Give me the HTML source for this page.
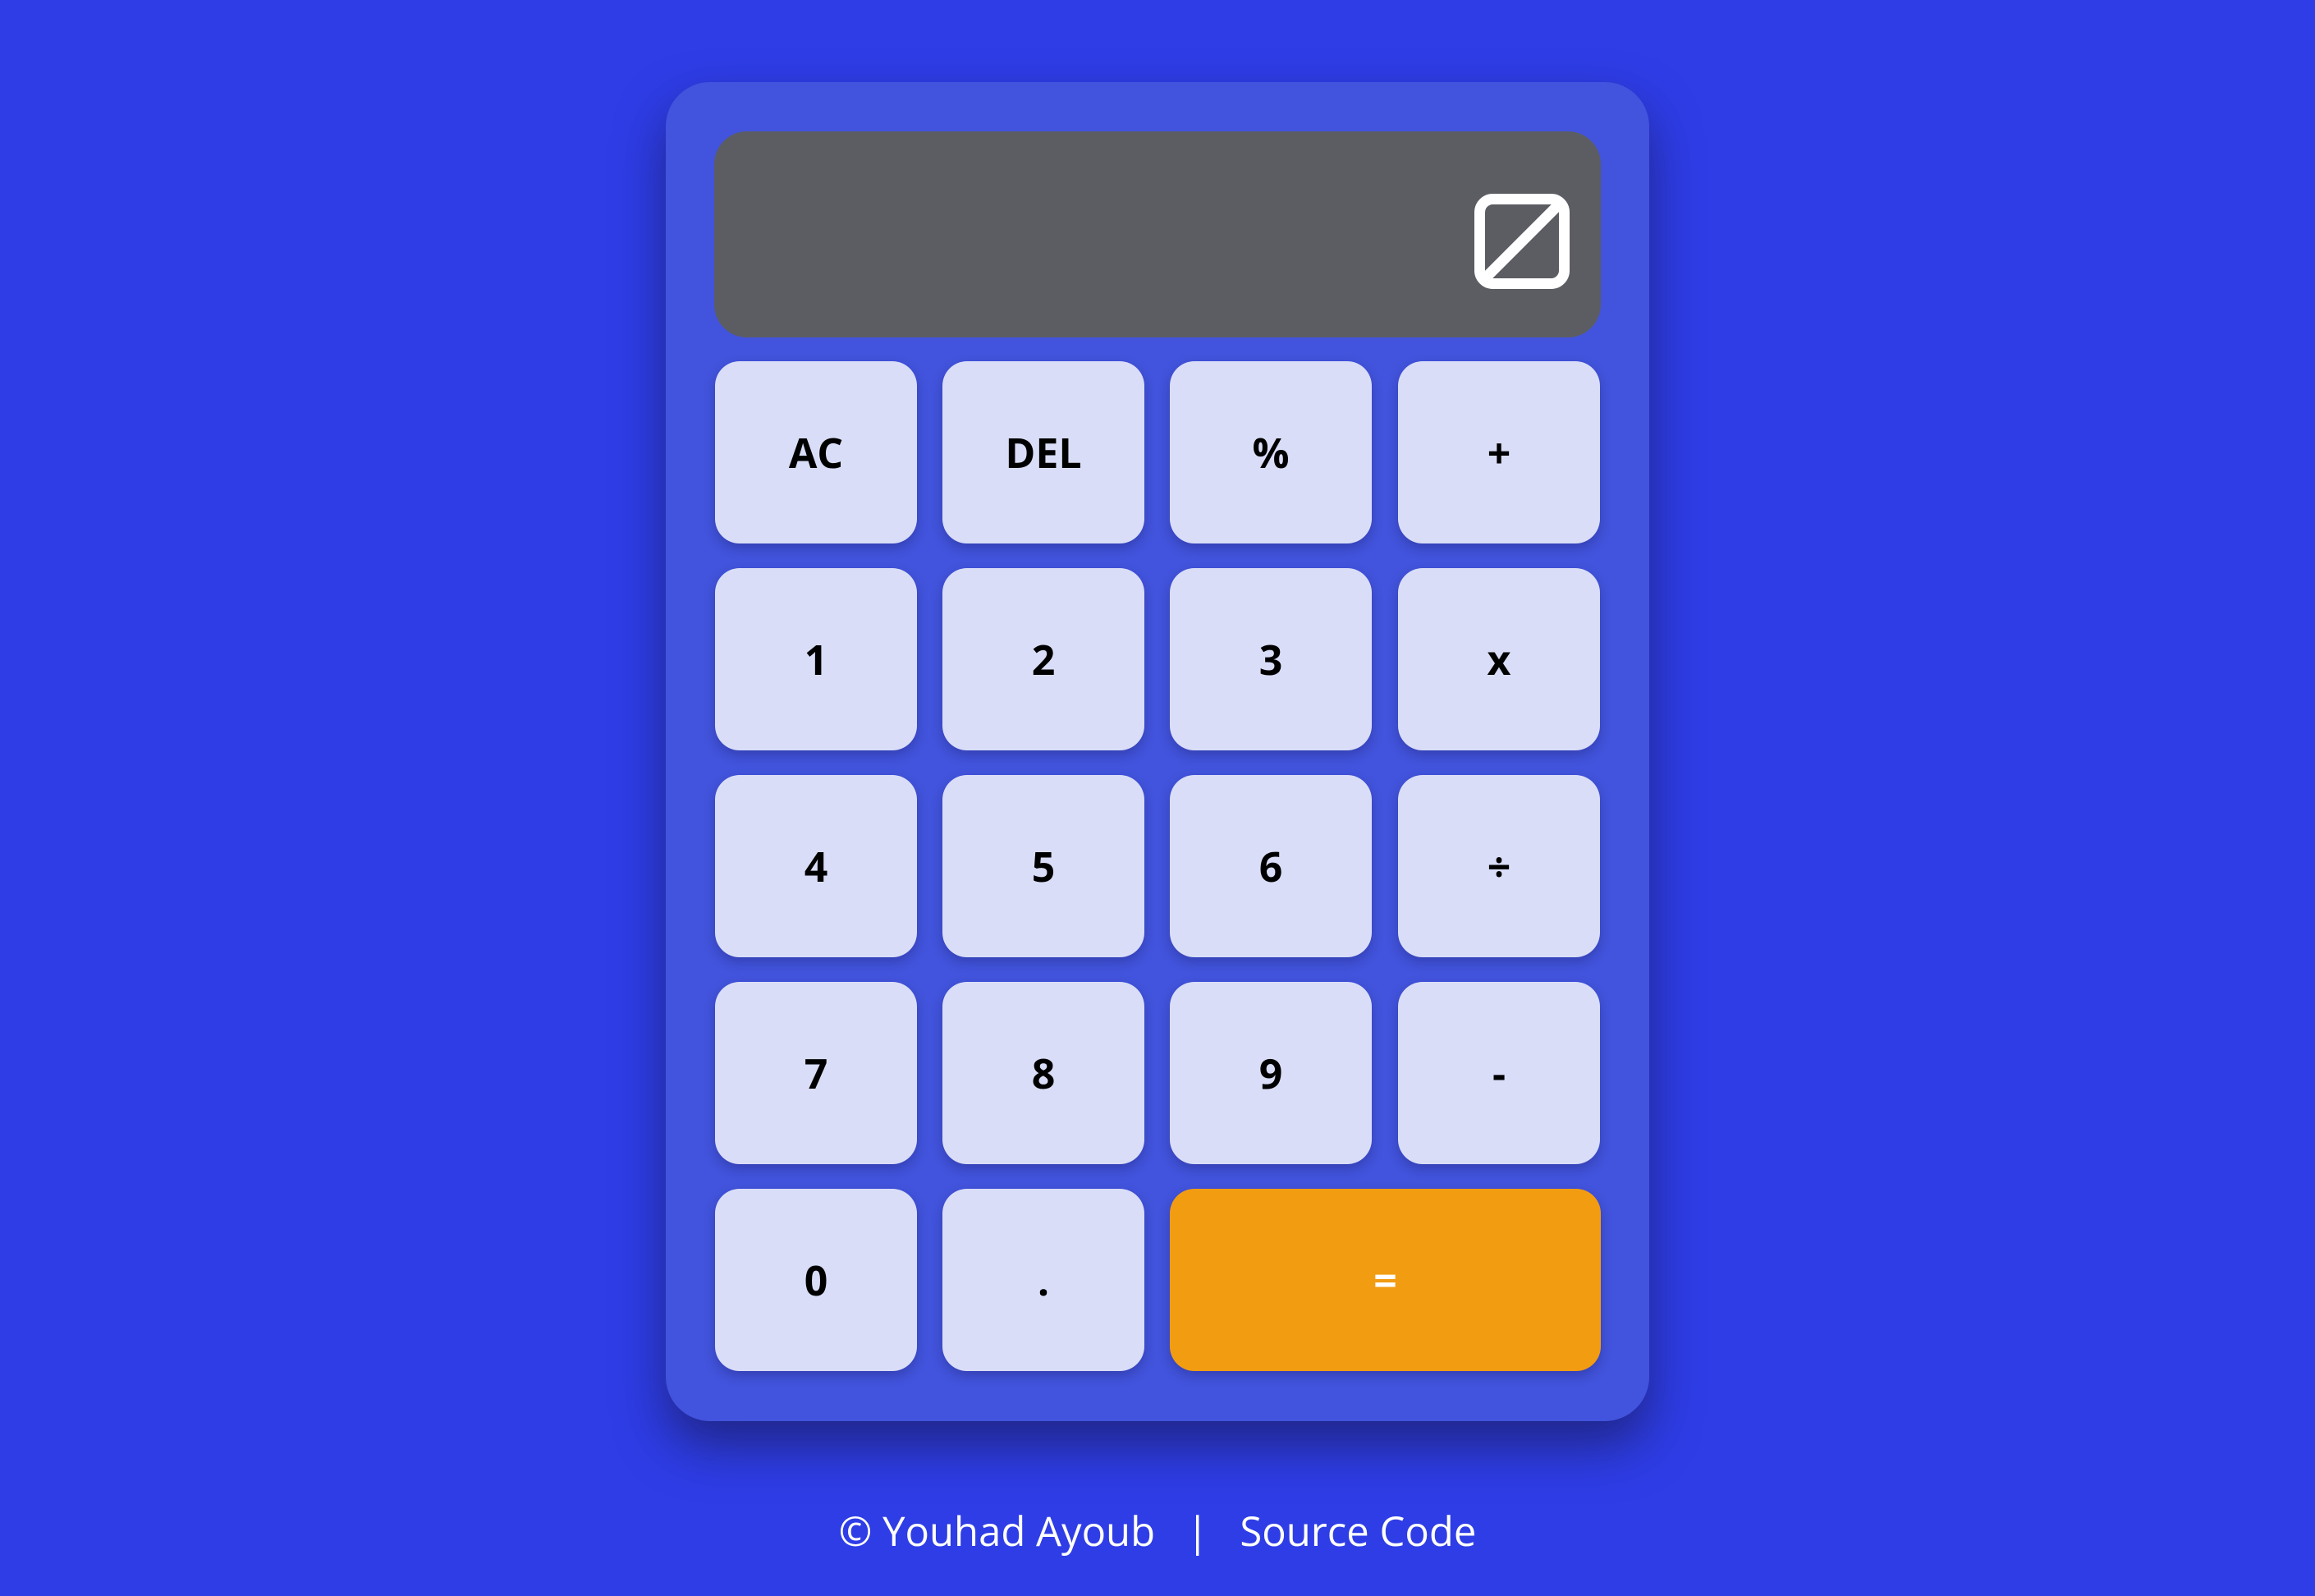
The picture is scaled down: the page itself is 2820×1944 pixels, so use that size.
<!DOCTYPE html>
<html><head><meta charset="utf-8"><style>
html,body{margin:0;padding:0;}
body{width:2820px;height:1944px;background:#2e3de6;position:relative;overflow:hidden;font-family:"Open Sans","Liberation Sans",sans-serif;}
.calc{position:absolute;left:811px;top:100px;width:1198px;height:1631px;background:#4254dd;border-radius:54px;box-shadow:0 30px 60px rgba(20,20,60,0.55);}
.disp{position:absolute;left:870px;top:160px;width:1080px;height:251px;background:#5c5d63;border-radius:40px;}
.b{position:absolute;width:246px;height:222px;background:#d9ddf7;border-radius:30px;display:flex;align-items:center;justify-content:center;font-weight:bold;font-size:50px;color:#000;box-shadow:0 6px 14px rgba(20,20,80,0.3);}
.eq{background:#f29c12;color:#fff;width:525px;}
.ft{position:absolute;top:1830px;left:0;width:2820px;text-align:center;color:#fff;font-size:49px;line-height:70px;}
</style></head><body>
<div class="calc"></div>
<div class="disp"></div>
<svg style="position:absolute;left:1796px;top:236px" width="116" height="116" viewBox="0 0 116 116">
<rect x="6.5" y="6.5" width="103" height="103" rx="16" fill="none" stroke="#fff" stroke-width="13"/>
<line x1="108" y1="8" x2="8" y2="108" stroke="#fff" stroke-width="13"/>
</svg>
<div class="b" style="left:871px;top:440px">AC</div>
<div class="b" style="left:1148px;top:440px">DEL</div>
<div class="b" style="left:1425px;top:440px">%</div>
<div class="b" style="left:1703px;top:440px">+</div>
<div class="b" style="left:871px;top:692px">1</div>
<div class="b" style="left:1148px;top:692px">2</div>
<div class="b" style="left:1425px;top:692px">3</div>
<div class="b" style="left:1703px;top:692px">x</div>
<div class="b" style="left:871px;top:944px">4</div>
<div class="b" style="left:1148px;top:944px">5</div>
<div class="b" style="left:1425px;top:944px">6</div>
<div class="b" style="left:1703px;top:944px">÷</div>
<div class="b" style="left:871px;top:1196px">7</div>
<div class="b" style="left:1148px;top:1196px">8</div>
<div class="b" style="left:1425px;top:1196px">9</div>
<div class="b" style="left:1703px;top:1196px">-</div>
<div class="b" style="left:871px;top:1448px">0</div>
<div class="b" style="left:1148px;top:1448px">.</div>
<div class="b eq" style="left:1425px;top:1448px">=</div>
<div class="ft">© Youhad Ayoub &nbsp;&nbsp;|&nbsp;&nbsp; Source Code</div>
</body></html>
